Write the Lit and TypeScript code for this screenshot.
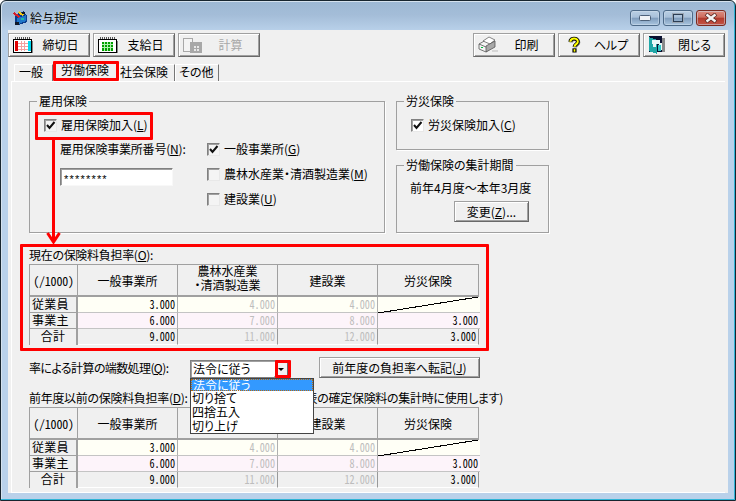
import { LitElement, html, svg, css } from 'lit';
import { customElement } from 'lit/decorators.js';

type Row = { label: string; cls: string; plain?: boolean; values: string[] };

const ROWS: Row[] = [
  { label: '従業員', cls: 'ivory', values: ['3.000', '4.000', '4.000', ''] },
  { label: '事業主', cls: 'pink', values: ['6.000', '7.000', '8.000', '3.000'] },
  { label: '合計', cls: 'total', plain: true, values: ['9.000', '11.000', '12.000', '3.000'] },
];

const calendar = (fill: unknown) => html`
  <svg class="ico" width="20" height="17" viewBox="0 0 20 17" shape-rendering="crispEdges">
    <rect x="0.5" y="2.5" width="18" height="13" fill="#fff" stroke="#000"/>
    <path d="M2 0v3M4 0v3M6 0v3M8 0v3M10 0v3M12 0v3M14 0v3M16 0v3" stroke="#555" stroke-dasharray="2 1"/>
    <rect x="19" y="4" width="1" height="12" fill="#888"/>
    ${fill}
  </svg>`;

const CAL_RED = svg`
  <rect x="2" y="4" width="3" height="10" fill="#e00000"/>
  <rect x="15" y="4" width="3" height="10" fill="#00d8f0"/>
  <path d="M5 6.5h10M5 9.500h10M5 12.500h10M8.500 4v10M11.500 4v10" stroke="#f4a0a0"/>`;
const CAL_GREEN = svg`
  <rect x="4" y="5" width="11" height="9" fill="#00a000"/>
  <path d="M4 7.500h11M4 10.500h11M6.500 5v9M9.500 5v9M12.500 5v9" stroke="#b0f0b0"/>`;

@customElement('app-root')
export class AppRoot extends LitElement {
  static styles = css`
    :host {
      display: block;
      width: 736px;
      height: 501px;
      background: #fff;
      font: 12px/14px 'Noto Sans CJK JP', 'Liberation Sans', sans-serif;
      font-feature-settings: 'palt';
      color: #000;
    }
    * { box-sizing: border-box; }
    .window {
      position: relative;
      width: 736px;
      height: 501px;
      padding: 0 7px 7px;
      display: flex;
      flex-direction: column;
      border: 1px solid #17252f;
      border-radius: 6px 6px 0 0;
      background: linear-gradient(#9db8d4 0, #a4bdd8 14px, #b9d1ea 30px);
      box-shadow: inset -1px -1px 0 #2fb4d6, inset 1px 1px 0 #d5e2ee;
      overflow: hidden;
    }
    .titlebar {
      height: 29px;
      flex: none;
      display: flex;
      align-items: center;
      padding: 4px 2px 0 4px;
      gap: 2px;
    }
    .titlebar .name { text-shadow: 0 0 4px #dfeaf4; font-feature-settings: normal; }
    .controls { margin-left: auto; display: flex; gap: 3px; margin-top: 1px; }
    .ctl {
      width: 30px;
      height: 16px;
      border: 1px solid #4d6a88;
      border-radius: 3px;
      display: flex;
      align-items: center;
      justify-content: center;
      background: linear-gradient(#b9cfe4 0, #a9c1da 45%, #7f9cbc 50%, #a9c5df 100%);
      box-shadow: inset 0 0 0 1px #d2e0ee80;
    }
    .ctl.close {
      border-color: #7c2a20;
      background: linear-gradient(#dd8d80 0, #cd6b5d 45%, #b23a2c 50%, #c45548 100%);
    }
    .client {
      flex: 1;
      min-height: 0;
      background: #f0f0f0;
      display: flex;
      flex-direction: column;
    }
    .toolbar {
      flex: none;
      display: flex;
      gap: 3px;
      padding: 3px 3px 0 0;
      height: 31px;
    }
    .toolbar .spacer { flex: 1; }
    .btn {
      border: 1px solid;
      border-color: #a0a0a0 #696969 #696969 #a0a0a0;
      box-shadow: inset 1px 1px 0 #fff, inset -1px -1px 0 #a0a0a0;
      background: #f0f0f0;
      display: flex;
      align-items: center;
      justify-content: center;
    }
    .tool {
      width: 82px;
      height: 24px;
      padding: 0 1px 0 4px;
      justify-content: flex-start;
    }
    .tool .ico { flex: none; }
    .tool .ico.help { margin: 0 2px 0 4px; }
    .tool span { flex: 1; text-align: center; }
    .tool.off { color: #a8a8a8; }
    .tabs {
      flex: none;
      height: 20px;
      padding: 3px 0 0 6px;
      display: flex;
      align-items: flex-end;
    }
    .tab {
      height: 17px;
      padding: 0 4px;
      border-right: 1px solid #777;
      border-top: 1px solid #fff;
      box-shadow: inset 1px 0 0 #fff;
      white-space: nowrap;
    }
    .tab.first { width: 39px; padding-left: 5px; }
    .tab.active { width: 66px; height: 19px; padding: 0 0 0 8px; border-right: 0; }
    .tab.social { width: 56px; padding-left: 1px; }
    .tab.other { width: 44px; padding-left: 4px; }
    .panel {
      flex: 1;
      min-height: 0;
      margin: 0 3px 0 3px;
      border-top: 1px solid #fff;
      border-left: 1px solid #fff;
      border-bottom: 1px solid #fff;
      padding: 19px 0 0 17px;
      overflow: hidden;
    }
    .groups { display: flex; gap: 11px; }
    .group {
      border: 1px solid #a0a0a0;
      box-shadow: 1px 1px 0 #fff;
    }
    .legend {
      width: fit-content;
      margin: -8px 0 0 7px;
      padding: 0 2px;
      background: #f0f0f0;
    }
    .legend.inset { margin-left: -7px; }
    .employ { width: 356px; height: 132px; padding-left: 14px; }
    .employ .grid {
      display: grid;
      grid-template-columns: 163px 1fr;
      margin-top: 9px;
    }
    .employ .top { grid-column: 1 / 3; height: 16px; }
    .number { padding: 9px 0 0 16px; display: flex; flex-direction: column; gap: 12px; }
    .number .lbl { letter-spacing: -0.2px; white-space: nowrap; }
    .kinds { padding-top: 8px; display: flex; flex-direction: column; gap: 9px; }
    .side { display: flex; flex-direction: column; gap: 15px; width: 153px; }
    .accident { height: 49px; padding-left: 14px; }
    .accident .chk { margin-top: 9px; }
    .period { height: 68px; }
    .period .range { padding: 9px 0 0 13px; white-space: nowrap; }
    .period .btn { width: 75px; height: 21px; margin: 6px 0 0 57px; }
    .chk { display: flex; align-items: center; gap: 4px; height: 16px; white-space: nowrap; }
    .box {
      width: 13px;
      height: 13px;
      flex: none;
      border: 1px solid;
      border-color: #808080 #e8e8e8 #e8e8e8 #808080;
      box-shadow: inset 1px 1px 0 #a0a0a0;
      background: #f4f4f4;
    }
    .box svg { display: block; margin: 1px 0 0 1px; }
    .box.white { background: #fff; }
    .field {
      width: 113px;
      height: 18px;
      border: 1px solid;
      border-color: #808080 #f8f8f8 #f8f8f8 #808080;
      box-shadow: inset 1px 1px 0 #a0a0a0;
      background: #fff;
      padding: 3px 0 0 3px;
      letter-spacing: 1.2px;
      font-feature-settings: normal;
      font-family: 'Liberation Sans', sans-serif;
      font-size: 11px;
    }
    .caption { margin-top: 15px; height: 16px; letter-spacing: -0.3px; }
    .rates {
      display: grid;
      grid-template-columns: 49px 100px 100px 100px 101px;
      width: 450px;
    }
    .head {
      height: 33px;
      padding-top: 1px;
      border: 1px solid #a0a0a0;
      border-width: 1px 1px 2px 0;
      display: flex;
      align-items: center;
      justify-content: center;
      text-align: center;
    }
    .head.first { border-left: 1px solid #a0a0a0; }
    .head.ratio { font-feature-settings: 'hwid'; letter-spacing: -0.2px; }
    .head .two { margin-top: -6px; }
    .who {
      height: 16px;
      border: 1px solid #a0a0a0;
      border-width: 0 2px 1px 1px;
      background: #f0f0f0;
      padding-left: 2px;
      letter-spacing: 0.3px;
    }
    .who.plain { border-bottom: 0; text-align: center; padding-left: 0; border-left: 1px solid #a0a0a0; }
    .val {
      height: 16px;
      border-right: 1px solid #b0b0b0;
      border-bottom: 1px solid #c4c4c4;
      text-align: right;
      padding-right: 2px;
      font-feature-settings: 'hwid';
      position: relative;
    }
    .val span { display: inline-block; transform: scaleX(0.85); transform-origin: right center; }
    .val.dim { color: #bdbdbd; }
    .ivory { background: #fffff6; }
    .pink { background: #fdf4fa; }
    .total { background: #f0f0f0; border-bottom: 1px solid #fff; border-right-color: #999; }
    .slash { display: block; position: absolute; inset: 0; }
    .val.last { margin-right: -1px; border-right: 0; }
    .total.last { border-right: 1px solid #999; margin-right: 0; }
    .rounding {
      margin-top: 12px;
      height: 21px;
      display: flex;
      align-items: flex-start;
    }
    .rounding .lbl { width: 161px; padding-top: 4px; letter-spacing: -0.6px; white-space: nowrap; }
    .combo {
      position: relative;
      width: 100px;
      height: 18px;
      margin-top: 3px;
      border: 1px solid #808080;
      border-right-color: #e4e4e4;
      box-shadow: inset 1px 1px 0 #a0a0a0;
      background: #fff;
      padding: 1px 0 0 2px;
    }
    .drop {
      position: absolute;
      right: 1px;
      top: 1px;
      width: 14px;
      height: 15px;
      background: #f0f0f0;
      border: 1px solid;
      border-color: #fff #696969 #696969 #fff;
      display: flex;
      align-items: center;
      justify-content: center;
    }
    .drop i {
      border: solid transparent;
      border-width: 3px 3px 0;
      border-top-color: #000;
      width: 0;
      height: 0;
    }
    .menu {
      position: absolute;
      left: -1px;
      top: 17px;
      width: 124px;
      height: 56px;
      background: #fff;
      border: 1px solid #444;
      z-index: 2;
    }
    .menu div { height: 14px; padding-left: 1px; white-space: nowrap; }
    .menu .sel {
      height: 12px;
      line-height: 12px;
      background: #3399ff;
      color: #fff;
      outline: 1px dotted #b86a10;
      outline-offset: -1px;
      padding-left: 2px;
    }
    .copy { width: 161px; height: 21px; margin-left: 29px; }
    .caption.second {
      margin-top: 13px;
      width: 474px;
      display: flex;
      justify-content: space-between;
      white-space: nowrap;
    }
    .mark {
      position: absolute;
      border: 3px solid #ff0000;
      border-radius: 1px;
      pointer-events: none;
      z-index: 3;
    }
    .m-tab { left: 52px; top: 60px; width: 66px; height: 20px; }
    .m-join { left: 34px; top: 111px; width: 118px; height: 28px; }
    .m-rate { left: 19px; top: 243px; width: 469px; height: 107px; }
    .m-drop { left: 274px; top: 359px; width: 16px; height: 18px; }
    .arrow { position: absolute; left: 43px; top: 138px; z-index: 3; }
  `;

  private _check(on: boolean, label: unknown, white = false) {
    return html`<div class="chk">
      <span class="box ${white ? 'white' : ''}">
        ${on
          ? html`<svg width="10" height="9" viewBox="0 0 10 9"><path d="M1 4l2.500 3L8.500 1" fill="none" stroke="#111" stroke-width="2"/></svg>`
          : ''}
      </span>
      <span>${label}</span>
    </div>`;
  }

  private _table(second = false) {
    // the second table's farm column title sits fully behind the open drop-down
    const farm = second ? '' : html`<div class="two">農林水産業<br />・清酒製造業</div>`;
    const heads = ['一般事業所', farm, '建設業', '労災保険'];
    return html`<div class="rates">
      <div class="head first ratio">(/1000)</div>
      ${heads.map((h) => html`<div class="head">${h}</div>`)}
      ${ROWS.map(
        (r) => html`
          <div class="who ${r.plain ? 'plain' : ''}">${r.label}</div>
          ${r.values.map(
            (v, i) => html`<div class="val ${r.cls} ${i === 1 || i === 2 ? 'dim' : ''} ${i === 3 ? 'last' : ''}">
              ${v
                ? html`<span>${v}</span>`
                : html`<svg class="slash" width="100" height="16" viewBox="0 0 100 16" shape-rendering="crispEdges">
                    <line x1="0" y1="16" x2="100" y2="0" stroke="#000"/>
                  </svg>`}
            </div>`
          )}
        `
      )}
    </div>`;
  }

  render() {
    return html`
      <div class="window">
        <div class="titlebar">
          <svg width="16" height="16" viewBox="0 0 16 16" shape-rendering="crispEdges">
            <path d="M3 5l9-4 3 5v6l-8 3-4-3z" fill="#0b3c8c"/>
            <path d="M5 8l9-3v6l-7 3-2-2z" fill="#1f76c8"/>
            <path d="M2 2l6 4-1 2-6-4z" fill="#d8202a"/>
            <path d="M7 1l5 3-1 2-5-3z" fill="#f0c818"/>
            <path d="M3 12h4v3H3zM10 2h3v2h-3z" fill="#101828"/>
            <path d="M9 8h3v2H9z" fill="#20b8a8"/>
          </svg>
          <span class="name">給与規定</span>
          <div class="controls">
            <div class="ctl"><svg width="12" height="6" viewBox="0 0 12 6"><rect x="0.5" y="0.5" width="11" height="5" rx="1" fill="#eef2f6" stroke="#4c617a"/></svg></div>
            <div class="ctl"><svg width="12" height="10" viewBox="0 0 12 10"><rect x="1" y="1" width="10" height="8" fill="none" stroke="#2c3e54" stroke-width="2"/><rect x="0.5" y="0.5" width="11" height="9" fill="none" stroke="#e6edf4" stroke-opacity="0.6"/></svg></div>
            <div class="ctl close"><svg width="14" height="10" viewBox="0 0 14 10"><path d="M2 1l10 8M12 1L2 9" stroke="#5e2a24" stroke-width="4"/><path d="M2.500 1.500l9 7M11.500 1.500l-9 7" stroke="#f4f4f4" stroke-width="2.400"/></svg></div>
          </div>
        </div>

        <div class="client">
          <div class="toolbar">
            <div class="btn tool">${calendar(CAL_RED)}<span>締切日</span></div>
            <div class="btn tool">${calendar(CAL_GREEN)}<span>支給日</span></div>
            <div class="btn tool off">
              <svg class="ico" width="20" height="17" viewBox="0 0 20 17" shape-rendering="crispEdges">
                <rect x="0.5" y="1.500" width="9" height="13" fill="#f4f4f4" stroke="#a8a8a8"/>
                <rect x="7" y="5" width="12" height="11" fill="#a8a8a8"/>
                <path d="M11 9h2v2h-2zM14 9h2v2h-2zM11 12h2v2h-2zM14 12h2v2h-2z" fill="#e8e8e8"/>
              </svg>
              <span>計算</span>
            </div>
            <div class="spacer"></div>
            <div class="btn tool">
              <svg class="ico" width="22" height="18" viewBox="0 0 22 18">
                <path d="M1 8l9-5 5 2v5l-7 6-7-3z" fill="#f4f4f4" stroke="#555" stroke-width="0.8"/>
                <path d="M5 5l6-4 6 3-5 4z" fill="#fff" stroke="#666" stroke-width="0.8"/>
                <path d="M8 16V10l9-5v6z" fill="#a8a8a8" stroke="#555" stroke-width="0.8"/>
                <path d="M1 8l7 3" stroke="#555" stroke-width="0.8" fill="none"/>
                <rect x="3" y="11" width="2" height="1" fill="#00c040"/>
                <path d="M14 15l6 0" stroke="#bbb"/>
              </svg>
              <span>印刷</span>
            </div>
            <div class="btn tool">
              <svg class="ico help" width="15" height="18" viewBox="0 0 18 20">
                <path d="M4 6c0-5 9-5 9 0 0 3-4 3-4 6" fill="none" stroke="#888" stroke-width="4" transform="translate(1 1)"/>
                <path d="M4 6c0-5 9-5 9 0 0 3-4 3-4 6" fill="none" stroke="#000" stroke-width="4.600"/>
                <path d="M4 6c0-5 9-5 9 0 0 3-4 3-4 6" fill="none" stroke="#ffff00" stroke-width="2.400"/>
                <rect x="6.500" y="14" width="5" height="5" fill="#000"/>
                <rect x="8" y="15" width="2" height="3" fill="#ffff00"/>
              </svg>
              <span>ヘルプ</span>
            </div>
            <div class="btn tool">
              <svg class="ico" width="18" height="18" viewBox="0 0 18 18" shape-rendering="crispEdges">
                <rect x="14" y="2" width="3" height="14" fill="#8a8a8a"/>
                <rect x="1" y="0" width="13" height="16" fill="#0a1030"/>
                <path d="M1 1l8 3v14l-8-3z" fill="#20a8a8"/>
                <path d="M4 4h8v3h2v7h-3V8H8v3H5z" fill="#e8f8f8"/>
                <path d="M10 9h3v6h-3z" fill="#30c8c8"/>
              </svg>
              <span>閉じる</span>
            </div>
          </div>

          <div class="tabs">
            <div class="tab first">一般</div>
            <div class="tab active">労働保険</div>
            <div class="tab social">社会保険</div>
            <div class="tab other">その他</div>
          </div>

          <div class="panel">
            <div class="groups">
              <div class="group employ">
                <div class="legend inset">雇用保険</div>
                <div class="grid">
                  <div class="top">${this._check(true, html`雇用保険加入(<u>L</u>)`)}</div>
                  <div class="number">
                    <div class="lbl">雇用保険事業所番号(<u>N</u>):</div>
                    <div class="field">********</div>
                  </div>
                  <div class="kinds">
                    ${this._check(true, html`一般事業所(<u>G</u>)`)}
                    ${this._check(false, html`農林水産業・清酒製造業(<u>M</u>)`)}
                    ${this._check(false, html`建設業(<u>U</u>)`)}
                  </div>
                </div>
              </div>
              <div class="side">
                <div class="group accident">
                  <div class="legend inset">労災保険</div>
                  ${this._check(true, html`労災保険加入(<u>C</u>)`, true)}
                </div>
                <div class="group period">
                  <div class="legend">労働保険の集計期間</div>
                  <div class="range">前年4月度～本年3月度</div>
                  <div class="btn">変更(<u>Z</u>)...</div>
                </div>
              </div>
            </div>

            <div class="caption">現在の保険料負担率(<u>O</u>):</div>
            ${this._table()}

            <div class="rounding">
              <div class="lbl">率による計算の端数処理(<u>Q</u>):</div>
              <div class="combo">
                法令に従う
                <div class="drop"><i></i></div>
                <div class="menu">
                  <div class="sel">法令に従う</div>
                  <div>切り捨て</div>
                  <div>四捨五入</div>
                  <div>切り上げ</div>
                </div>
              </div>
              <div class="btn copy">前年度の負担率へ転記(<u>J</u>)</div>
            </div>

            <div class="caption second">
              <span>前年度以前の保険料負担率(<u>D</u>):</span>
              <span>表の確定保険料の集計時に使用します)</span>
            </div>
            ${this._table(true)}
          </div>
        </div>

        <div class="mark m-tab"></div>
        <div class="mark m-join"></div>
        <div class="mark m-rate"></div>
        <div class="mark m-drop"></div>
        <svg class="arrow" width="20" height="106" viewBox="0 0 20 106" shape-rendering="crispEdges">
          <rect x="8" y="0" width="3" height="102" fill="#ff0000"/>
          <path d="M3.500 94l6 9 6-9" fill="none" stroke="#ff0000" stroke-width="3" shape-rendering="auto"/>
        </svg>
      </div>
    `;
  }
}
